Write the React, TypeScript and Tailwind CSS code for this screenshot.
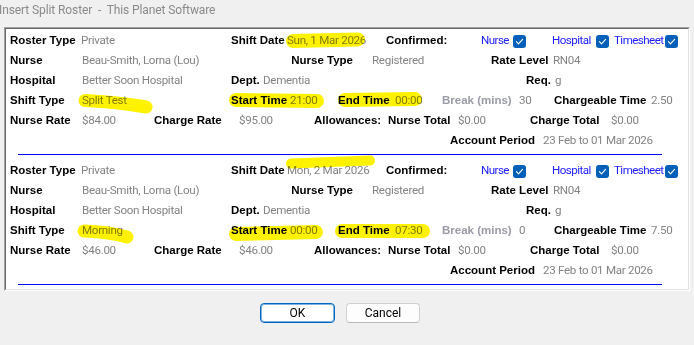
import { twMerge } from 'tailwind-merge'
import type { ReactNode } from 'react'

type Shift = {
  date: string
  shiftType: string
  start: string
  end: string
  breakMins: string
  chargeable: string
  nurseRate: string
  chargeRate: string
}

const shifts: Shift[] = [
  { date: 'Sun, 1 Mar 2026', shiftType: 'Split Test', start: '21:00', end: '00:00', breakMins: '30', chargeable: '2.50', nurseRate: '$84.00', chargeRate: '$95.00' },
  { date: 'Mon, 2 Mar 2026', shiftType: 'Morning', start: '00:00', end: '07:30', breakMins: '0', chargeable: '7.50', nurseRate: '$46.00', chargeRate: '$46.00' },
]

type CellProps = { className?: string; children?: ReactNode }

const Label = ({ className, children }: CellProps) => (
  <span className={twMerge("shrink-0 font-['Liberation_Sans',Arial,sans-serif] text-[11.5px] font-bold text-black", className)}>
    {children}
  </span>
)

const Value = ({ className, children }: CellProps) => (
  <span className={twMerge("shrink-0 font-['Roboto',sans-serif] text-[11.6px] tracking-[-0.3px] text-[#838383]", className)}>
    {children}
  </span>
)

const Row = ({ children }: CellProps) => <div className="flex h-5 items-center whitespace-nowrap pl-1">{children}</div>

const Check = () => (
  <svg width="13" height="13" viewBox="0 0 13 13" className="shrink-0">
    <rect x="0" y="0" width="13" height="13" rx="3" fill="#005fb8" />
    <path d="M3.4 6.7 L5.5 8.8 L9.6 4.4" fill="none" stroke="white" strokeWidth="1.1" strokeLinecap="round" strokeLinejoin="round" />
  </svg>
)

const Blue = ({ className, children }: CellProps) => (
  <span className={twMerge("shrink-0 font-['Roboto',sans-serif] text-[11.6px] tracking-[-0.55px] text-[#2020ff]", className)}>
    {children}
  </span>
)

const Block = ({ s }: { s: Shift }) => (
  <div className="flex flex-col">
    <Row>
      <Label className="w-[71px]">Roster Type</Label>
      <Value className="w-[150px]">Private</Value>
      <Label className="w-[56px]">Shift Date</Label>
      <Value className="w-[99px]">{s.date}</Value>
      <Label className="w-[95px]">Confirmed:</Label>
      <Blue className="w-[32px]">Nurse</Blue>
      <span className="w-[39px] shrink-0"><Check /></span>
      <Blue className="w-[44px]">Hospital</Blue>
      <span className="w-[18px] shrink-0"><Check /></span>
      <Blue className="w-[51px]">Timesheet</Blue>
      <Check />
    </Row>
    <Row>
      <Label className="w-[72px]">Nurse</Label>
      <Value className="w-[200px]">Beau-Smith, Lorna (Lou)</Value>
      <Label className="w-[71px] text-right">Nurse Type</Label>
      <Value className="w-[138px] pl-[19px]">Registered</Value>
      <Label className="w-[62px]">Rate Level</Label>
      <Value>RN04</Value>
    </Row>
    <Row>
      <Label className="w-[72px]">Hospital</Label>
      <Value className="w-[149px]">Better Soon Hospital</Value>
      <Label className="w-[32px]">Dept.</Label>
      <Value className="w-[263px]">Dementia</Value>
      <Label className="w-[29px]">Req.</Label>
      <Value>g</Value>
    </Row>
    <Row>
      <Label className="w-[72px]">Shift Type</Label>
      <Value className="w-[149px]">{s.shiftType}</Value>
      <Label className="w-[59px]">Start Time</Label>
      <Value className="w-[48px]">{s.start}</Value>
      <Label className="w-[57px]">End Time</Label>
      <Value className="w-[47px]">{s.end}</Value>
      <Label className="w-[77px] text-[#9a9ba6]">Break (mins)</Label>
      <Value className="w-[35px]">{s.breakMins}</Value>
      <Label className="w-[97px]">Chargeable Time</Label>
      <Value>{s.chargeable}</Value>
    </Row>
    <Row>
      <Label className="w-[72px]">Nurse Rate</Label>
      <Value className="w-[72px]">{s.nurseRate}</Value>
      <Label className="w-[85px]">Charge Rate</Label>
      <Value className="w-[75px]">{s.chargeRate}</Value>
      <Label className="w-[74px]">Allowances:</Label>
      <Label className="w-[70px]">Nurse Total</Label>
      <Value className="w-[72px]">$0.00</Value>
      <Label className="w-[81px]">Charge Total</Label>
      <Value>$0.00</Value>
    </Row>
    <Row>
      <span className="w-[440px] shrink-0" />
      <Label className="w-[93px]">Account Period</Label>
      <Value>23 Feb to 01 Mar 2026</Value>
    </Row>
    <div className="mt-[3px] ml-[12px] h-px w-[644px] bg-[#0000ff]" />
  </div>
)

// highlighter marks drawn over the form
const Highlights = () => (
  <svg width="694" height="345" className="pointer-events-none absolute top-0 left-0 mix-blend-multiply">
    <g fill="none" stroke="#fff200" strokeLinecap="round" strokeLinejoin="round">
      <path d="M293 41 L358 39.5" strokeWidth="14" />
      <path d="M85 100.5 Q118 102 146 107" strokeWidth="13" />
      <path d="M236 100 L317 101" strokeWidth="14" />
      <path d="M345 100 L415 99" strokeWidth="14" />
      <path d="M291 163.5 L370 160.5" strokeWidth="10" />
      <path d="M84 231 Q110 232 127 237" strokeWidth="13" />
      <path d="M236 234 L316 232" strokeWidth="14" />
      <path d="M342 231 L423 231" strokeWidth="14" />
    </g>
  </svg>
)

export default function App() {
  return (
    <div className="relative h-[345px] w-[694px] overflow-hidden bg-[#f0f0f0]">
      <div className="-ml-px h-[27px] whitespace-pre pt-[2px] font-['Roboto',sans-serif] text-[12px] leading-[16px] tracking-[-0.1px] text-[#8a8a8a]">
        Insert Split Roster  -  This Planet Software
      </div>
      <div className="ml-1 w-[686px] border border-t-[#a0a0a0] border-r-white border-b-white border-l-[#a0a0a0]">
        <div className="flex flex-col gap-[6px] border border-t-[#696969] border-r-[#e3e3e3] border-b-[#e3e3e3] border-l-[#696969] bg-white pt-[2px] pb-[4px]">
          {shifts.map((s) => (
            <Block key={s.date} s={s} />
          ))}
        </div>
      </div>
      <div className="mt-3 flex gap-[11px] pl-[260px] font-['Roboto',sans-serif] text-[12px] text-black">
        <button className="h-5 w-[75px] rounded-[4px] border border-[#0067c0] bg-white shadow-[inset_0_0_0_1px_#7fb2e0]">OK</button>
        <button className="h-5 w-[74px] rounded-[4px] border border-[#d0d0d0] border-b-[#b8b8b8] bg-[#fdfdfd]">Cancel</button>
      </div>
      <Highlights />
    </div>
  )
}
